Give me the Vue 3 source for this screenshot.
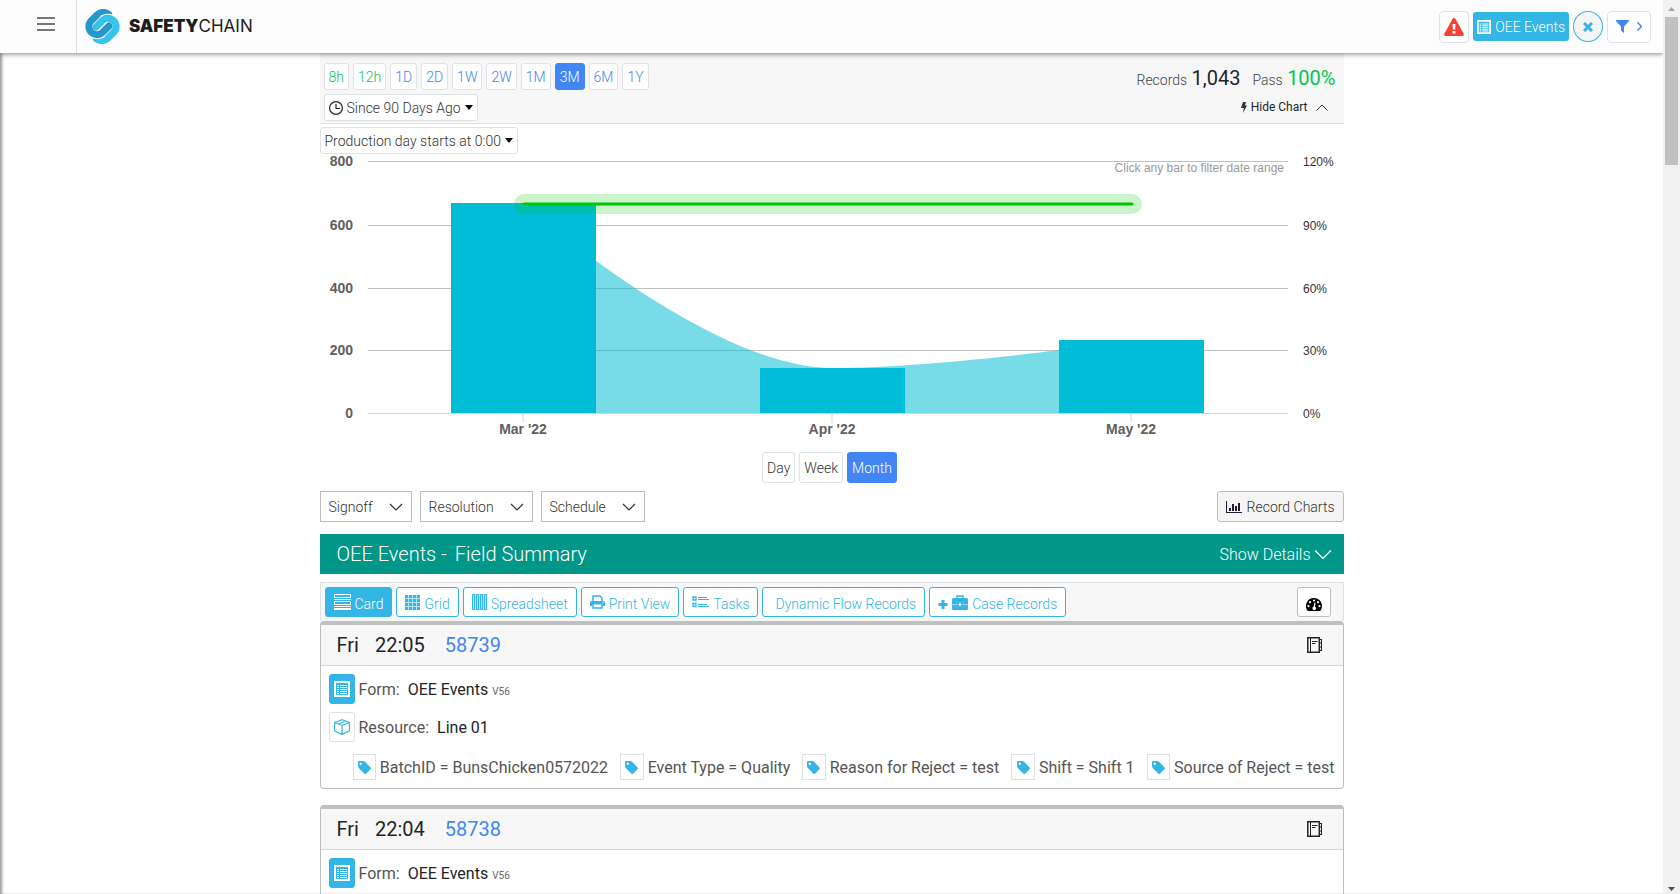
<script setup>
import { ref } from 'vue'

const ranges = [
  { label: '8h', kind: 'hour' },
  { label: '12h', kind: 'hour' },
  { label: '1D' },
  { label: '2D' },
  { label: '1W' },
  { label: '2W' },
  { label: '1M' },
  { label: '3M' },
  { label: '6M' },
  { label: '1Y' }
]
const range = ref('3M')

const units = ['Day', 'Week', 'Month']
const unit = ref('Month')

const gridLines = [
  { y: 8, left: '800', right: '120%' },
  { y: 72, left: '600', right: '90%' },
  { y: 135, left: '400', right: '60%' },
  { y: 197, left: '200', right: '30%' },
  { y: 260, left: '0', right: '0%' }
]
const bars = [
  { label: "Mar '22", x: 203, top: 49 },
  { label: "Apr '22", x: 512, top: 214 },
  { label: "May '22", x: 811, top: 186 }
]

const filters = ['Signoff', 'Resolution', 'Schedule']

const views = [
  { label: 'Card', icon: 'card' },
  { label: 'Grid', icon: 'grid' },
  { label: 'Spreadsheet', icon: 'sheet' },
  { label: 'Print View', icon: 'print' },
  { label: 'Tasks', icon: 'tasks' },
  { label: 'Dynamic Flow Records', icon: '' },
  { label: 'Case Records', icon: 'case' }
]
const view = ref('Card')

const records = [
  {
    day: 'Fri',
    time: '22:05',
    id: '58739',
    form: 'OEE Events',
    version: 'V56',
    resource: 'Line 01',
    tags: [
      'BatchID = BunsChicken0572022',
      'Event Type = Quality',
      'Reason for Reject = test',
      'Shift = Shift 1',
      'Source of Reject = test'
    ]
  },
  { day: 'Fri', time: '22:04', id: '58738', form: 'OEE Events', version: 'V56', resource: '', tags: [] }
]
</script>

<template>
  <div class="app">
    <svg class="sprite" aria-hidden="true">
      <symbol id="i-form" viewBox="0 0 16 16">
        <path fill="currentColor" fill-rule="evenodd" d="M0 0h16v16H0zM2 2v12h12V2zM3 4h2v1H3zM6 4h7v1H6zM3 6h2v1H3zM6 6h7v1H6zM3 8h2v1H3zM6 8h7v1H6zM3 10h2v1H3zM6 10h7v1H6zM3 12h2v1H3zM6 12h7v1H6z" />
      </symbol>
      <symbol id="i-down" viewBox="0 0 16 16">
        <path fill="none" stroke="currentColor" stroke-width="1.200" d="M2 5l6 6 6-6" />
      </symbol>
      <symbol id="i-card" viewBox="0 0 17 16">
        <path fill="none" stroke="currentColor" d="M.5.5h16v3H.5zM.5 7.500h16v3H.5zM0 5.500h17M0 12.500h17" />
        <path fill="currentColor" d="M0 14h17v2H0z" />
      </symbol>
      <symbol id="i-grid" viewBox="0 0 15 15">
        <path fill="currentColor" opacity=".35" d="M0 0h15v15H0z" />
        <path fill="currentColor" d="M0 0h3v3H0zM4 0h3v3H4zM8 0h3v3H8zM12 0h3v3h-3zM0 4h3v3H0zM4 4h3v3H4zM8 4h3v3H8zM12 4h3v3h-3zM0 8h3v3H0zM4 8h3v3H4zM8 8h3v3H8zM12 8h3v3h-3zM0 12h3v3H0zM4 12h3v3H4zM8 12h3v3H8zM12 12h3v3h-3z" />
      </symbol>
      <symbol id="i-sheet" viewBox="0 0 15 16">
        <path fill="currentColor" opacity=".4" d="M0 0h15v16H0z" />
        <path fill="none" stroke="currentColor" d="M.5.5h2v15h-2zM4.500.5h2v15h-2zM8.500.5h2v15h-2zM12.500.5h2v15h-2z" />
      </symbol>
      <symbol id="i-print" viewBox="0 0 15 14">
        <path fill="none" stroke="currentColor" stroke-width="1.500" d="M3 7V1h7l2 2v4" />
        <path fill="currentColor" fill-rule="evenodd" d="M1.500 6h12A1.500 1.500 0 0 1 15 7.500V11h-2.500V9.500h-10V11H0V7.500A1.500 1.500 0 0 1 1.500 6zM12.500 7.200v1h1v-1z" />
        <path fill="none" stroke="currentColor" stroke-width="1.500" d="M3 9.500V13h9V9.500" />
      </symbol>
      <symbol id="i-tasks" viewBox="0 0 17 12">
        <path fill="none" stroke="currentColor" stroke-width="1.300" d="M1 1h3v3H1zM1 7.500h3v3H1z" />
        <path fill="none" stroke="currentColor" d="M6 1.500h9M6 3.500h11M6 8.500h9M6 10.500h11" />
      </symbol>
      <symbol id="i-case" viewBox="0 0 30 15">
        <path fill="currentColor" d="M3.500 5h3v3h3v3h-3v3h-3v-3h-3V8h3z" />
        <path fill="none" stroke="currentColor" stroke-width="1.500" d="M19 4V1h6v3" />
        <path fill="currentColor" d="M15.500 3h13A1.500 1.500 0 0 1 30 4.500V9h-7V8h-2v1h-7V4.500A1.500 1.500 0 0 1 15.500 3zM14 9.600h7v1.400h2V9.600h7v3.900a1.500 1.500 0 0 1-1.500 1.500h-13a1.500 1.500 0 0 1-1.500-1.500z" />
      </symbol>
      <symbol id="i-tag" viewBox="0 0 14 14">
        <path fill="currentColor" fill-rule="evenodd" d="M1 0h4.500C6.300 0 7 .3 7.600.9l6 6c.5.5.5 1.200 0 1.700l-5 5c-.5.5-1.200.5-1.700 0l-6-6C.3 7 0 6.300 0 5.500V1c0-.6.4-1 1-1zM3 1.700a1.300 1.300 0 1 0 0 2.600 1.300 1.300 0 0 0 0-2.600z" />
      </symbol>
      <symbol id="i-cube" viewBox="0 0 16 16">
        <path fill="none" stroke="currentColor" stroke-width="1.200" stroke-linejoin="round" d="M8 .7L15.400 3.500V12L8 15.400.6 12V3.500zM.6 3.500L8 6.500l7.400-3M8 6.500v9M4.200 5L12 2" />
      </symbol>
      <symbol id="i-book" viewBox="0 0 15 16">
        <path fill="none" stroke="currentColor" stroke-width="1.500" d="M.8.8h11.500v14.400H.8z" />
        <path fill="none" stroke="currentColor" d="M3.500.6v14.800M5 4.500h5.500M5 6.500h3.500M14.500 2.500v11M13 2.500h2M13 6h2M13 10h2M13 13.500h2" />
      </symbol>
    </svg>

    <div class="page">
      <header class="topbar">
        <button class="menu" aria-label="Menu">
          <svg width="18" height="16" viewBox="0 0 18 16"><path stroke="#777" stroke-width="2" d="M0 2h18M0 8h18M0 14h18" /></svg>
        </button>
        <a class="brand" href="#" aria-label="SafetyChain home">
          <svg width="35" height="35" viewBox="0 0 35 35" fill="none" stroke-linecap="round">
            <path stroke="#2497cb" stroke-width="6" d="M12 6C15 2 20 2 24 5" />
            <path stroke="#34c4ee" stroke-width="6" d="M23 29C20 33 15 33 11 30" />
            <path stroke="#fcfcfc" stroke-width="9" d="M11 18L17 12A8 8 0 0 1 29 23" />
            <path stroke="#fcfcfc" stroke-width="9" d="M24 17L18 23A8 8 0 0 1 6 12" />
            <path stroke="#2497cb" stroke-width="7" d="M24 17L18 23A8 8 0 0 1 6 12L12 6" />
            <path stroke="#34c4ee" stroke-width="7" d="M11 18L17 12A8 8 0 0 1 29 23L23 29" />
          </svg>
          <span class="wordmark"><b>SAFETY</b>CHAIN</span>
        </a>
        <div class="tools">
          <button class="tool warn" aria-label="Alerts">
            <svg width="20" height="18" viewBox="0 0 20 18"><path fill="#f44336" d="M8.600.8a1.600 1.600 0 0 1 2.800 0l8.300 15A1.500 1.500 0 0 1 18.400 18H1.600a1.500 1.500 0 0 1-1.300-2.200z" /><path fill="#fff" d="M8.500 6h3l-.4 5.500H8.900zM8.500 13h3v2.500h-3z" /></svg>
          </button>
          <button class="formchip">
            <svg width="14" height="14"><use href="#i-form" /></svg>OEE Events
          </button>
          <button class="close" aria-label="Clear form">
            <svg width="10" height="10" viewBox="0 0 10 10"><path stroke="#33b5e5" stroke-width="3" d="M1 1l8 8M9 1L1 9" /></svg>
          </button>
          <button class="tool filter" aria-label="Filters">
            <svg width="13" height="13" viewBox="0 0 13 13"><path fill="#4285f4" d="M0 0h13v1L8 6.500V13l-3-2.500v-4L0 1z" /></svg>
            <svg width="5" height="9" viewBox="0 0 5 9"><path fill="none" stroke="#4285f4" stroke-width="1.500" d="M.5.5l4 4-4 4" /></svg>
          </button>
        </div>
      </header>

      <main class="content">
        <section class="rangebar">
          <div class="rangeleft">
            <div class="btns">
              <button
                v-for="r in ranges"
                :key="r.label"
                class="pill"
                :class="{ hour: r.kind, on: range === r.label }"
                @click="range = r.label"
              >{{ r.label }}</button>
            </div>
            <button class="drop">
              <svg width="14" height="14" viewBox="0 0 14 14"><path fill="none" stroke="#212529" stroke-width="1.200" d="M7 .6a6.400 6.400 0 1 1 0 12.800A6.400 6.400 0 0 1 7 .6zM7 3v4.500h4" /></svg>
              Since 90 Days Ago<i class="caret"></i>
            </button>
          </div>
          <div class="stats">
            <p class="totals">
              <span>Records <b>1,043</b></span>
              <span>Pass <b class="ok">100%</b></span>
            </p>
            <button class="hide">
              <svg width="6" height="11" viewBox="0 0 6 11"><path fill="#333" d="M2 0h3L4 3.500h2L2 11l.8-5H0z" /></svg>
              Hide Chart
              <svg class="up" width="12" height="7" viewBox="0 0 12 7"><path fill="none" stroke="#333" d="M.5 6.500L6 1l5.500 5.500" /></svg>
            </button>
          </div>
        </section>

        <button class="drop second">Production day starts at 0:00<i class="caret"></i></button>

        <svg class="chart" viewBox="0 0 1024 286" role="img" aria-label="Records per month">
          <g v-for="g in gridLines" :key="g.y">
            <rect x="48" :y="g.y - 1" width="920" height="1" :fill="g.left === '0' ? '#ccd6eb' : '#c0c0c0'" />
            <text class="ylab" x="33" :y="g.y + 4" text-anchor="end">{{ g.left }}</text>
            <text class="plab" x="983" :y="g.y + 4">{{ g.right }}</text>
          </g>
          <path fill="#00bcd4" fill-opacity=".53" d="M203 49C203 49 389 214 512 214C632 214 811 186 811 186V259H203z" />
          <g v-for="b in bars" :key="b.label">
            <rect :x="b.x - 72" :y="b.top" width="145" :height="259 - b.top" fill="#00bcd7" />
            <path :d="`M${b.x} 260v9`" stroke="#ccd6eb" />
            <text class="xlab" :x="b.x" y="280" text-anchor="middle">{{ b.label }}</text>
          </g>
          <path stroke="#00c800" stroke-opacity=".2" stroke-width="20" stroke-linecap="round" d="M204 50H812" />
          <path stroke="#00c800" stroke-width="3" stroke-linecap="round" d="M204 50H812" />
          <text class="hint" x="964" y="18" text-anchor="end">Click any bar to filter date range</text>
        </svg>

        <div class="btns units">
          <button v-for="u in units" :key="u" class="pill tall" :class="{ on: unit === u }" @click="unit = u">{{ u }}</button>
        </div>

        <div class="filters">
          <label v-for="f in filters" :key="f" class="sel">
            <select :aria-label="f"><option>{{ f }}</option></select>
            <svg width="16" height="16"><use href="#i-down" /></svg>
          </label>
          <button class="charts">
            <svg width="16" height="12" viewBox="0 0 16 12"><path fill="#2a1a3a" d="M0 0h1v11h15v1H0zM3 7h2v3H3zM6 3h2v7H6zM9 5h2v5H9zM12 2h2v8h-2z" /></svg>
            Record Charts
          </button>
        </div>

        <section class="summary">
          <h1><span>OEE Events -</span><span>Field Summary</span></h1>
          <button>Show Details<svg width="18" height="18" viewBox="0 0 16 16"><path fill="none" stroke="#fff" stroke-width="1.200" d="M1 4l7 7 7-7" /></svg></button>
        </section>

        <nav class="viewbar">
          <button v-for="v in views" :key="v.label" class="view" :class="{ on: view === v.label }" @click="view = v.label">
            <svg v-if="v.icon" :class="v.icon"><use :href="'#i-' + v.icon" /></svg>
            <span :class="{ bare: !v.icon }">{{ v.label }}</span>
          </button>
          <button class="dash" aria-label="Dashboard">
            <svg width="16" height="13" viewBox="0 0 16 13"><path fill="#000" d="M8 0a8 8 0 0 1 8 8c0 1.600-.4 3-1.200 4.300-.3.500-.6.700-1 .700H2.200c-.4 0-.7-.2-1-.7A8 8 0 0 1 8 0z" /><g fill="#fff"><circle cx="8" cy="2.500" r="1.100" /><circle cx="4" cy="4.200" r="1.100" /><circle cx="12" cy="4.200" r="1.100" /><circle cx="2.500" cy="8.200" r="1.100" /><circle cx="13.500" cy="8.200" r="1.100" /><path d="M8.500 4.500h1l-.5 4.300a1.700 1.700 0 1 1-1.500 0z" /></g></svg>
          </button>
        </nav>

        <article v-for="r in records" :key="r.id" class="record">
          <header>
            <span>{{ r.day }}</span>
            <span>{{ r.time }}</span>
            <a href="#">{{ r.id }}</a>
            <button aria-label="Open log"><svg width="15" height="16"><use href="#i-book" /></svg></button>
          </header>
          <div class="body">
            <div class="row">
              <span class="box solid"><svg width="16" height="16"><use href="#i-form" /></svg></span>
              <span class="key">Form:</span>
              <span class="val">{{ r.form }}</span>
              <small>{{ r.version }}</small>
            </div>
            <div v-if="r.resource" class="row">
              <span class="box"><svg width="16" height="16"><use href="#i-cube" /></svg></span>
              <span class="key">Resource:</span>
              <span class="val">{{ r.resource }}</span>
            </div>
            <ul v-if="r.tags.length">
              <li v-for="t in r.tags" :key="t">
                <span class="tagbox"><svg width="13" height="13"><use href="#i-tag" /></svg></span>
                <span class="tagtext">{{ t }}</span>
              </li>
            </ul>
          </div>
        </article>
      </main>
    </div>

    <div class="scroll" aria-hidden="true">
      <svg width="7" height="4" viewBox="0 0 7 4"><path fill="#a3a3a3" d="M0 4l3.500-4L7 4z" /></svg>
      <div class="track"><div class="thumb"></div></div>
      <svg width="7" height="4" viewBox="0 0 7 4"><path fill="#505050" d="M0 0h7L3.500 4z" /></svg>
    </div>
  </div>
</template>

<style>
body {
  margin: 0;
  overflow: hidden;
}
</style>

<style scoped>
* {
  box-sizing: border-box;
}
.app {
  display: flex;
  height: 100vh;
  overflow: hidden;
  font: 300 14px/20px Roboto, "Liberation Sans", sans-serif;
  color: #212529;
  background: #fff;
}
.sprite {
  position: absolute;
  width: 0;
  height: 0;
}
button,
select {
  font: inherit;
  color: inherit;
  margin: 0;
  padding: 0;
  border: 0;
  background: none;
  white-space: nowrap;
  cursor: pointer;
}
svg {
  display: block;
  flex: none;
}
a {
  text-decoration: none;
}
.page {
  flex: 1;
  min-width: 0;
  overflow: hidden;
  box-shadow: inset 3px 0 3px -1px #999;
}
.topbar {
  position: relative;
  display: flex;
  align-items: center;
  height: 53px;
  background: #fcfcfc;
  box-shadow: 0 1px 5px rgba(0, 0, 0, .5);
}
.menu {
  align-self: stretch;
  width: 77px;
  padding: 0 0 6px 37px;
  border-right: 1px solid #dedede;
}
.brand {
  display: flex;
  align-items: center;
  gap: 9px;
  margin-left: 8px;
  color: #1d1d1d;
}
.wordmark {
  padding-bottom: 2px;
  font: 400 17px/24px Inter, "Open Sans", sans-serif;
}
.wordmark b {
  font-weight: 900;
}
.tools {
  display: flex;
  align-items: center;
  gap: 4px;
  margin: 0 12px 0 auto;
}
.tool {
  display: flex;
  align-items: center;
  justify-content: center;
  height: 32px;
  border: 1px solid #dee2e6;
  border-radius: 4px;
  background: #fff;
}
.warn {
  width: 30px;
}
.filter {
  width: 44px;
  gap: 8px;
}
.formchip {
  display: flex;
  align-items: center;
  gap: 4px;
  height: 29px;
  padding: 0 4px;
  border-radius: 3px;
  background: #33b5e5;
  color: #fff;
}
.close {
  display: grid;
  place-items: center;
  width: 30px;
  height: 31px;
  border: 1px solid #33b5e5;
  border-radius: 50%;
  background: #f5f5f5;
}
.content {
  max-width: 1024px;
  margin: 0 auto;
}
.rangebar {
  display: flex;
  justify-content: space-between;
  padding: 10px 8px 2px 4px;
  border-bottom: 1px solid #dee2e6;
  background: #f7f7f7;
}
.btns {
  display: flex;
  gap: 4px;
}
.pill {
  height: 27px;
  padding: 0 4px;
  border: 1px solid #dee2e6;
  border-radius: 3px;
  background: #fff;
  color: #4285f4;
}
.pill.hour {
  color: #00c851;
}
.pill.tall {
  height: 31px;
  color: #333;
}
.pill.on {
  border-color: #4285f4;
  background: #4285f4;
  color: #fff;
}
.drop {
  display: flex;
  align-items: center;
  gap: 4px;
  height: 27px;
  margin-top: 4px;
  padding: 0 4px;
  border: 1px solid #dee2e6;
  border-radius: 3px;
  background: #fff;
  color: #333;
}
.second {
  margin-top: 3px;
}
.caret {
  border: 4px solid transparent;
  border-top: 5px solid #000;
  border-bottom: 0;
}
.totals {
  display: flex;
  gap: 12px;
  margin: 0;
  line-height: 30px;
  color: #444;
}
.totals b {
  margin-left: 1px;
  font-size: 20px;
  font-weight: 400;
  color: #212529;
}
.totals .ok {
  color: #00c851;
}
.hide {
  display: flex;
  align-items: center;
  gap: 4px;
  margin-left: auto;
  padding-right: 8px;
  font-size: 12px;
  font-weight: 400;
  line-height: 24px;
}
.up {
  margin-left: 4px;
}
.chart {
  width: 100%;
  height: auto;
  overflow: visible;
}
.ylab,
.xlab {
  font: 700 14px "Liberation Sans", sans-serif;
  fill: #606060;
}
.plab {
  font: 400 12px "Liberation Sans", sans-serif;
  fill: #333;
}
.hint {
  font: 400 12px "Liberation Sans", sans-serif;
  fill: #999;
}
.units {
  justify-content: center;
  margin-top: 12px;
  padding-right: 4px;
}
.filters {
  display: flex;
  gap: 8px;
  margin-top: 8px;
  color: #333;
}
.sel {
  display: grid;
  align-items: center;
}
.sel select {
  grid-area: 1 / 1;
  appearance: none;
  height: 31px;
  padding: 0 37px 0 8px;
  border: 1px solid #bdbdbd;
}
.sel svg {
  grid-area: 1 / 1;
  justify-self: end;
  margin-right: 8px;
  pointer-events: none;
}
.charts {
  display: flex;
  align-items: center;
  gap: 5px;
  margin-left: auto;
  padding: 0 8px;
  border: 1px solid #bdbdbd;
  border-radius: 3px;
  background: #f5f5f5;
}
.summary {
  display: flex;
  align-items: center;
  justify-content: space-between;
  height: 40px;
  margin-top: 12px;
  padding: 0 12px 0 17px;
  background: #009688;
  color: #fff;
}
.summary h1 {
  display: flex;
  gap: 8px;
  margin: 0;
  font-size: 20px;
  font-weight: 300;
}
.summary button {
  display: flex;
  align-items: center;
  gap: 3px;
  padding-top: 2px;
  font-size: 16px;
}
.viewbar {
  display: flex;
  gap: 4px;
  margin-top: 8px;
  padding: 4px 12px 4px 4px;
  border: 1px solid #dee2e6;
  border-bottom: 0;
  background: #f7f7f7;
}
.view {
  display: flex;
  align-items: center;
  gap: 4px;
  height: 30px;
  padding: 0 8px;
  border: 1px solid #33b5e5;
  border-radius: 3px;
  background: #fff;
  color: #33b5e5;
}
.view span {
  padding-top: 4px;
}
.view .bare {
  padding-left: 4px;
}
.view.on {
  background: #33b5e5;
  color: #fff;
}
.view .card {
  width: 17px;
  height: 16px;
}
.view .grid {
  width: 15px;
  height: 15px;
}
.view .sheet {
  width: 15px;
  height: 16px;
}
.view .print {
  width: 15px;
  height: 14px;
}
.view .tasks {
  width: 17px;
  height: 12px;
}
.view .case {
  width: 30px;
  height: 15px;
}
.dash {
  display: grid;
  place-items: center;
  width: 34px;
  height: 30px;
  margin-left: auto;
  padding-top: 4px;
  border: 1px solid #bdbdbd;
  border-radius: 3px;
  background: #fff;
}
.record {
  margin-bottom: 16px;
  border: 1px solid #bdbdbd;
  border-top: 4px solid #bfc0c0;
  border-radius: 4px;
}
.record header {
  display: flex;
  align-items: center;
  gap: 16px;
  height: 41px;
  padding: 0 21px 0 16px;
  border-bottom: 1px solid #d6d6d6;
  background: #f7f7f7;
  font-size: 20px;
  font-weight: 400;
}
.record header a {
  margin-left: 4px;
  color: #4285f4;
}
.record header button {
  margin-left: auto;
}
.body {
  padding: 8px;
}
.row {
  display: flex;
  align-items: center;
  gap: 4px;
  margin-bottom: 8px;
  font-size: 16px;
  font-weight: 400;
}
.box {
  display: grid;
  place-items: center;
  width: 26px;
  height: 30px;
  border: 1px solid #dee2e6;
  border-radius: 3px;
  color: #33b5e5;
}
.box.solid {
  border-color: #33b5e5;
  background: #33b5e5;
  color: #fff;
}
.key,
.val,
.tagtext {
  padding-top: 2px;
}
.key {
  margin-right: 4px;
  color: #555;
}
.row small {
  padding-top: 5px;
  font-size: 10px;
  color: #666;
}
ul {
  display: flex;
  gap: 12px;
  margin: 12px 0 0 24px;
  padding: 0;
  list-style: none;
  white-space: nowrap;
  font-size: 16px;
  font-weight: 400;
  color: #555;
}
li {
  display: flex;
  align-items: center;
  gap: 4px;
  min-width: 0;
}
.tagtext {
  flex: none;
}
.tagbox {
  display: grid;
  place-items: center;
  width: 24px;
  min-width: 0;
  height: 26px;
  border: 1px solid #dee2e6;
  color: #33b5e5;
}
.scroll {
  display: flex;
  flex-direction: column;
  align-items: center;
  width: 17px;
  padding: 7px 0 3px;
  background: #f1f1f1;
}
.track {
  flex: 1;
  width: 13px;
  padding-top: 6px;
}
.thumb {
  height: 17%;
  background: #c1c1c1;
}
</style>
